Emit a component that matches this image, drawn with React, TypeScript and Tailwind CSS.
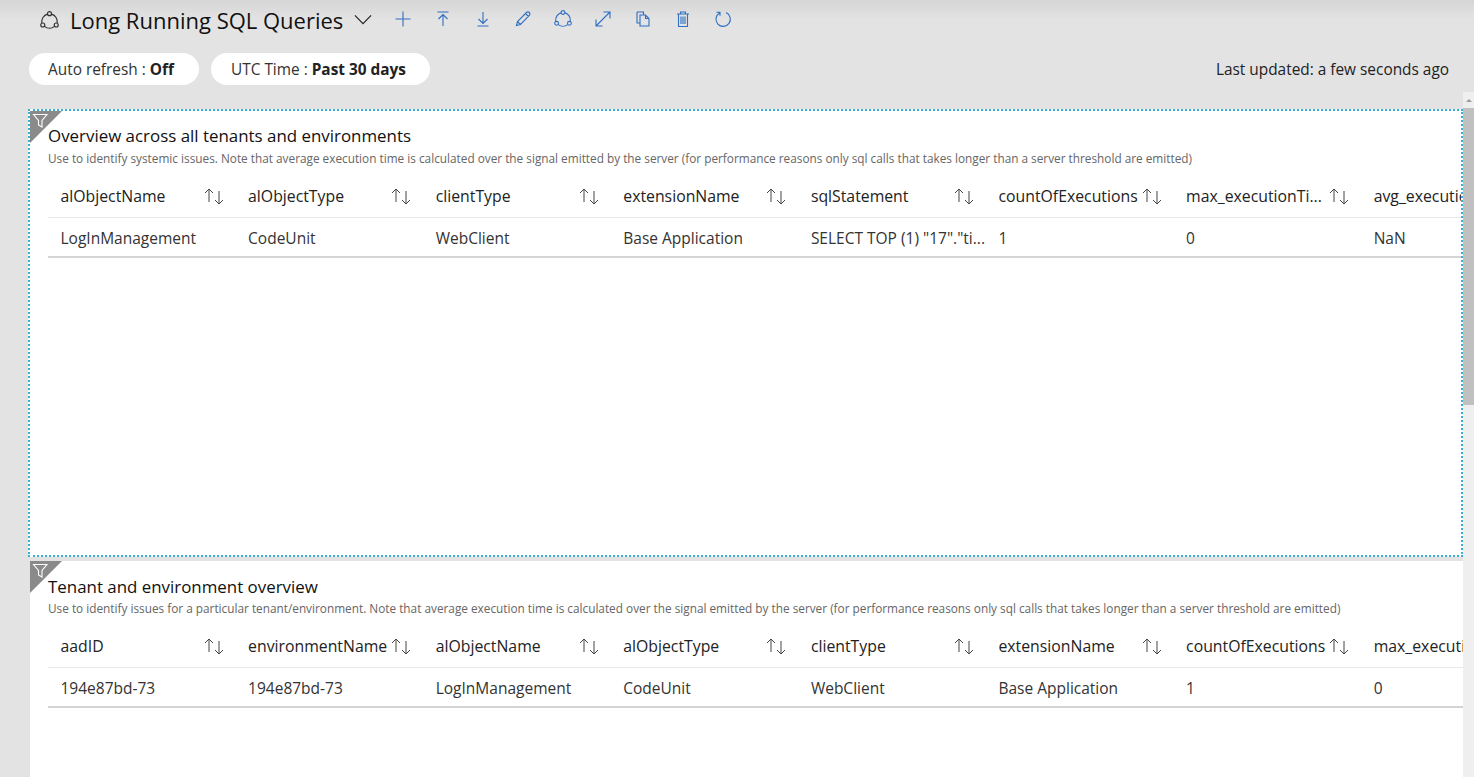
import React from "react";

const font = { fontFamily: '"Open Sans","Noto Sans",sans-serif' };

function I({ children, w = 20 }: { children: React.ReactNode; w?: number }) {
  return (
    <svg width={w} height={w} viewBox="0 0 20 20" fill="none" stroke="#2f6fc4" strokeWidth="1.1" className="shrink-0">
      {children}
    </svg>
  );
}

function ShareIcon({ color = "#2f6fc4", size = 20 }: { color?: string; size?: number }) {
  return (
    <svg width={size} height={size} viewBox="0 0 20 20" fill="none" stroke={color} strokeWidth="1.1" className="shrink-0">
      <path d="M8.1 3.9 A7.5 7.5 0 0 0 2.7 12.4" />
      <path d="M11.9 3.9 A7.5 7.5 0 0 1 17.3 12.4" />
      <path d="M5.3 15.6 A7.5 7.5 0 0 0 14.7 15.6" />
      <circle cx="10" cy="3.5" r="1.9" />
      <circle cx="3.6" cy="14.3" r="1.9" />
      <circle cx="16.4" cy="14.3" r="1.9" />
    </svg>
  );
}

function SortIcon() {
  return (
    <svg width="22" height="18" viewBox="0 0 22 18" fill="none" stroke="#444" strokeWidth="1" className="shrink-0">
      <path d="M6 15V2M2 6L6 2l4 4" />
      <path d="M16 4v13M12 13l4 4 4-4" />
    </svg>
  );
}

function FilterCorner() {
  return (
    <div className="absolute left-0 top-0 z-10 h-[32px] w-[32px]">
      <svg width="32" height="32" viewBox="0 0 32 32">
        <path d="M0 0H32L0 32Z" fill="#8a8a8a" />
        <path d="M3.5 3.5H17L12 9.5V16L8.5 14V9.5Z" fill="none" stroke="#fff" strokeWidth="1.1" />
      </svg>
    </div>
  );
}

function DataTable({ cols, row, className }: { cols: string[]; row: string[]; className: string }) {
  return (
    <div className={`${className} overflow-hidden`}>
      <div className="flex h-[42px] w-[1500px] items-center border-b border-[#e8e8e8] pb-[1px]">
        {cols.map((c, i) => (
          <div key={i} className="flex w-[187.6px] shrink-0 items-center justify-between pl-[12.5px] pr-[11px]">
            <span className="whitespace-nowrap text-[15.8px] leading-[20px] text-[#222]">{c}</span>
            {i < 7 && <SortIcon />}
          </div>
        ))}
      </div>
      <div className="flex h-[40px] w-[1500px] items-center border-b-2 border-[#d4d4d4] pt-[1px]">
        {row.map((c, i) => (
          <div key={i} className="w-[187.6px] shrink-0 whitespace-nowrap pl-[12.5px] text-[15.5px] leading-[20px] text-[#333]">
            {c}
          </div>
        ))}
      </div>
    </div>
  );
}

export default function App() {
  return (
    <div style={font} className="flex h-[777px] w-[1474px] flex-col overflow-hidden bg-[#e3e3e3]">
      <div className="flex h-[40px] shrink-0 items-center bg-gradient-to-b from-[#d6d6d6] via-[#e3e3e3] to-[#e3e3e3] pl-[39px]">
        <ShareIcon color="#333" size={21} />
        <span className="ml-[10px] whitespace-nowrap text-[22px] font-medium leading-[40px] text-[#111]">Long Running SQL Queries</span>
        <svg width="18" height="11" viewBox="0 0 20 12" fill="none" stroke="#222" strokeWidth="1.3" className="ml-[11px] mb-[2px]">
          <path d="M1 1.5L10 10.5L19 1.5" />
        </svg>
        <div className="mb-[2px] ml-[21px] flex items-center gap-[20px]">
          <I><path d="M10 2.5v15M2.5 10h15" /></I>
          <I><path d="M4.5 3h11M10 17V5.5M5.5 10L10 5.5l4.5 4.5" /></I>
          <I><path d="M4.5 17h11M10 3v11.5M5.5 10l4.5 4.5 4.5-4.5" /></I>
          <I><path d="M3.5 16.5l1-4L13.5 3.5a1.6 1.6 0 0 1 2.8 2.8L7.5 15.5zM4.5 12.5l3 3M12.5 4.5l3 3" /></I>
          <ShareIcon />
          <I><path d="M3 17L17 3M10.5 3H17V9.5M3 10.5V17H9.5" /></I>
          <I><path d="M4 3h6.5v2.5M4 3v11h3M7 6h5.5L16 9.5V17H7zM12.5 6v3.5H16" /></I>
          <I><path d="M4 5h12M7.5 5V3h5v2M5.5 5v12.5h9V5M8 7.5v7.5M10 7.5v7.5M12 7.5v7.5" /></I>
          <I><path d="M6.5 4A7.2 7.2 0 1 0 13 3.6M3.5 3.2H7V6.8" /></I>
        </div>
      </div>

      <div className="flex h-[52px] shrink-0 items-start pl-[29px] pr-[25px] pt-[13px]">
        <div className="flex h-[32px] w-[170px] items-center rounded-full bg-white pl-[19px] pt-[2px] text-[15.4px] text-[#333]">
          Auto refresh :&nbsp;<b className="font-bold text-[#222]">Off</b>
        </div>
        <div className="ml-[12px] flex h-[32px] w-[219px] items-center rounded-full bg-white pl-[20px] pt-[2px] text-[15.4px] text-[#333]">
          UTC Time :&nbsp;<b className="font-bold text-[#222]">Past 30 days</b>
        </div>
        <div className="ml-auto pt-[7px] text-[15.4px] leading-[20px] text-[#222]">Last updated: a few seconds ago</div>
      </div>

      <div className="flex min-h-0 flex-1">
        <div className="min-w-0 flex-1 pl-[28px] pt-[17px]">
          <div className="relative h-[448px] border-2 border-dotted border-[#35b0d6] bg-white pl-[18px]">
            <FilterCorner />
            <div className="pt-[13px]">
              <div className="text-[16.9px] font-medium leading-[24px] text-[#111]">Overview across all tenants and environments</div>
              <div className="mt-[1px] whitespace-nowrap text-[11.8px] leading-[18px] text-[#666]">
                Use to identify systemic issues. Note that average execution time is calculated over the signal emitted by the server (for performance reasons only sql calls that takes longer than a server threshold are emitted)
              </div>
            </div>
            <DataTable
              className="mt-[9px]"
              cols={["alObjectName", "alObjectType", "clientType", "extensionName", "sqlStatement", "countOfExecutions", "max_executionTi...", "avg_execution"]}
              row={["LogInManagement", "CodeUnit", "WebClient", "Base Application", 'SELECT TOP (1) "17"."ti...', "1", "0", "NaN"]}
            />
          </div>
          <div className="relative ml-[2px] mt-[4px] h-[300px] bg-white pl-[18px]">
            <FilterCorner />
            <div className="pt-[14px]">
              <div className="text-[16.9px] font-medium leading-[24px] text-[#111]">Tenant and environment overview</div>
              <div className="whitespace-nowrap text-[11.8px] leading-[18px] text-[#666]">
                Use to identify issues for a particular tenant/environment. Note that average execution time is calculated over the signal emitted by the server (for performance reasons only sql calls that takes longer than a server threshold are emitted)
              </div>
            </div>
            <DataTable
              className="mt-[9px]"
              cols={["aadID", "environmentName", "alObjectName", "alObjectType", "clientType", "extensionName", "countOfExecutions", "max_execution"]}
              row={["194e87bd-73", "194e87bd-73", "LogInManagement", "CodeUnit", "WebClient", "Base Application", "1", "0"]}
            />
          </div>
        </div>
        <div className="w-[11px] shrink-0 bg-[#efefef]">
          <div className="flex h-[16px] items-center justify-center">
            <div className="h-0 w-0 border-x-[3px] border-b-[3px] border-x-transparent border-b-[#999]" />
          </div>
          <div className="h-[297px] bg-[#c0c0c0]" />
        </div>
      </div>
    </div>
  );
}
